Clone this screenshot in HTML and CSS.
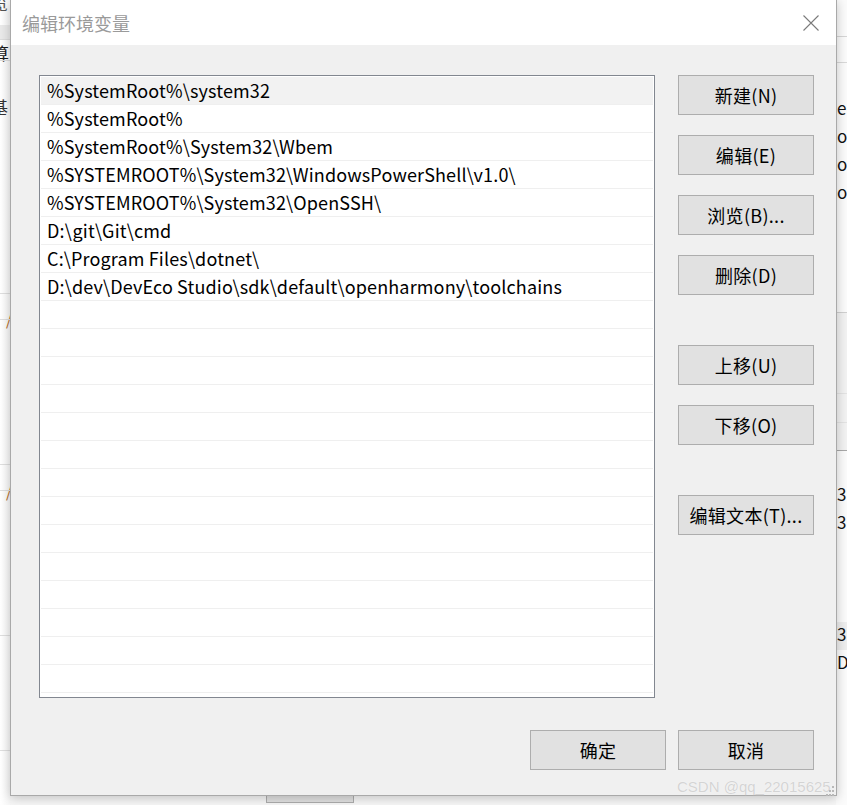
FILE: index.html
```html
<!DOCTYPE html>
<html lang="zh-CN">
<head>
<meta charset="utf-8">
<title>编辑环境变量</title>
<link rel="stylesheet" href="styles.css">
</head>
<body>
<div class="desktop">
  <div class="backwin">
    <div class="bw-left">
      <span class="frag f-lan">览</span>
      <div class="bw-band"></div>
      <span class="frag f-suan">算</span>
      <span class="frag f-ji">基</span>
      <div class="bw-line l1"></div>
      <div class="bw-line l2"></div>
      <span class="frag f-o1">/</span>
      <div class="bw-line l3"></div>
      <div class="bw-line l4"></div>
      <span class="frag f-o2">/</span>
      <div class="bw-line l5"></div>
      <div class="bw-line l6"></div>
    </div>
    <div class="bw-right">
      <div class="bwr-line r0"></div>
      <div class="bwr-band"></div>
      <span class="rfrag" style="top:100px">el</span>
      <span class="rfrag" style="top:128px">ol</span>
      <span class="rfrag" style="top:156px">ol</span>
      <span class="rfrag" style="top:184px">ol</span>
      <div class="bwr-gray"></div>
      <span class="rfrag" style="top:486px">3</span>
      <span class="rfrag" style="top:514px">3</span>
      <div class="bwr-row"></div>
      <span class="rfrag" style="top:626px">3</span>
      <span class="rfrag" style="top:654px">D</span>
    </div>
    <div class="bw-bottombtn"></div>
  </div>

  <div class="dialog">
    <div class="titlebar">
      <span class="title">编辑环境变量</span>
      <svg class="close" width="16" height="16" viewBox="0 0 16 16"><path d="M0.5 0.5 L15.5 15.5 M15.5 0.5 L0.5 15.5" stroke="#7a7a7a" stroke-width="1.1" fill="none"/></svg>
    </div>
    <div class="body">
      <div class="main">
        <div class="list">
          <div class="row selected">%SystemRoot%\system32</div>
          <div class="row">%SystemRoot%</div>
          <div class="row">%SystemRoot%\System32\Wbem</div>
          <div class="row">%SYSTEMROOT%\System32\WindowsPowerShell\v1.0\</div>
          <div class="row">%SYSTEMROOT%\System32\OpenSSH\</div>
          <div class="row">D:\git\Git\cmd</div>
          <div class="row">C:\Program Files\dotnet\</div>
          <div class="row">D:\dev\DevEco Studio\sdk\default\openharmony\toolchains</div>
          <div class="row"></div>
          <div class="row"></div>
          <div class="row"></div>
          <div class="row"></div>
          <div class="row"></div>
          <div class="row"></div>
          <div class="row"></div>
          <div class="row"></div>
          <div class="row"></div>
          <div class="row"></div>
          <div class="row"></div>
          <div class="row"></div>
          <div class="row"></div>
          <div class="row"></div>
        </div>
        <div class="side">
          <button class="btn">新建(N)</button>
          <button class="btn">编辑(E)</button>
          <button class="btn">浏览(B)...</button>
          <button class="btn">删除(D)</button>
          <button class="btn gap">上移(U)</button>
          <button class="btn">下移(O)</button>
          <button class="btn gap">编辑文本(T)...</button>
        </div>
      </div>
      <div class="footer">
        <button class="btn">确定</button>
        <button class="btn">取消</button>
      </div>
    </div>
    <span class="watermark">CSDN @qq_22015625</span>
    <svg class="grip" width="8" height="10" viewBox="0 0 8 10"><g fill="#b8b8b8"><rect x="6" y="0" width="2" height="2"/><rect x="3" y="4" width="2" height="2"/><rect x="6" y="4" width="2" height="2"/><rect x="0" y="8" width="2" height="2"/><rect x="3" y="8" width="2" height="2"/><rect x="6" y="8" width="2" height="2"/></g></svg>
  </div>
</div>
</body>
</html>
```

FILE: styles.css
```css
* { box-sizing: border-box; }
html, body {
  margin: 0;
  padding: 0;
}
body {
  width: 847px;
  height: 805px;
  overflow: hidden;
  background: #f7f7f7;
  font-family: "Noto Sans CJK SC", "Noto Sans", sans-serif;
}
.desktop {
  position: relative;
  width: 847px;
  height: 805px;
  overflow: hidden;
}

/* background window fragments */
.backwin { position: absolute; inset: 0; }
.bw-left {
  position: absolute; left: 0; top: 0; width: 11px; height: 805px;
  background: linear-gradient(to right, #ffffff, #f6f6f6);
}
.bw-band {
  position: absolute; left: 0; top: 25px; width: 11px; height: 15px;
  background: #e9e9e9; border-bottom: 1px solid #dcdcdc;
}
.frag {
  position: absolute; font-size: 17px; line-height: 17px; color: #1a1a1a;
}
.f-lan { left: -9px; top: -6px; color: #555; }
.f-suan { left: -8px; top: 44px; }
.f-ji { left: -9px; top: 98px; color: #333; }
.f-o1 { left: 6px; top: 311px; color: #b46a1c; font-size: 15px; }
.f-o2 { left: 6px; top: 483px; color: #b46a1c; font-size: 15px; }
.bw-line { position: absolute; left: 0; width: 11px; height: 1px; background: #dedede; }
.l1 { top: 60px; }
.l2 { top: 293px; }
.l3 { top: 319px; }
.l4 { top: 464px; }
.l5 { top: 490px; }
.l6 { top: 635px; }
.bw-left::after {
  content: ""; position: absolute; left: 0; top: 750px; width: 11px; height: 1px; background: #dedede;
}

.bw-right {
  position: absolute; left: 836px; top: 0; width: 11px; height: 805px; background: #fbfbfb;
}
.bwr-line { position: absolute; left: 0; width: 11px; height: 1px; background: #d6d6d6; }
.r0 { top: 36px; }
.bwr-band { position: absolute; left: 0; top: 62px; width: 11px; height: 1px; background: #d9d9d9; }
.rfrag {
  position: absolute; left: 1px; font-size: 17px; line-height: 16px; color: #111;
  font-family: "Noto Sans CJK SC", sans-serif;
}
.bwr-gray {
  position: absolute; left: 0; top: 312px; width: 11px; height: 139px;
  background: #f2f2f2; border-top: 1px solid #d0d0d0; border-bottom: 1px solid #a8a8a8;
}
.bwr-gray::before {
  content: ""; position: absolute; left: 0; top: 80px; width: 11px; height: 28px;
  border-top: 1px solid #e3e3e3; border-bottom: 1px solid #e3e3e3;
}
.bwr-row {
  position: absolute; left: 0; top: 622px; width: 11px; height: 28px; background: #eeeeee;
}
.bw-bottombtn {
  position: absolute; left: 266px; top: 790px; width: 88px; height: 13px;
  background: #e1e1e1; border: 1px solid #adadad;
}

/* dialog */
.dialog {
  position: absolute;
  left: 10px;
  top: -1px;
  width: 827px;
  height: 797px;
  background: #f0f0f0;
  border: 1px solid #a9a9a9;
  box-shadow: 0 2px 10px rgba(0,0,0,0.22);
  display: flex;
  flex-direction: column;
}
.titlebar {
  height: 45px;
  background: #ffffff;
  display: flex;
  align-items: center;
  justify-content: space-between;
  padding: 0 17px 0 11px;
  flex: none;
}
.title {
  font-size: 18px;
  color: #9a9a9a;
}
.close { display: block; margin-top: 1px; }

.body {
  flex: 1;
  padding: 30px 22px 0 28px;
  display: flex;
  flex-direction: column;
}
.main {
  display: flex;
  gap: 23px;
}
.list {
  width: 616px;
  height: 623px;
  background: #ffffff;
  border: 1px solid #828790;
  padding: 1px 1px 0 1px;
  overflow: hidden;
}
.row {
  height: 28px;
  line-height: 27px;
  border-bottom: 1px solid #efefef;
  padding-left: 6px;
  font-size: 18px;
  letter-spacing: 0.15px;
  color: #000;
  white-space: nowrap;
}
.row.selected { background: #f2f2f2; }

.side {
  display: flex;
  flex-direction: column;
  gap: 20px;
}
.btn {
  width: 136px;
  height: 40px;
  background: #e1e1e1;
  border: 1px solid #adadad;
  border-radius: 0;
  font-family: "Noto Sans CJK SC", "Noto Sans", sans-serif;
  font-size: 18px;
  letter-spacing: 0.3px;
  color: #000;
  padding: 0;
  margin: 0;
  line-height: 38px;
}
.side .btn.gap { margin-top: 30px; }
.footer {
  display: flex;
  justify-content: flex-end;
  gap: 12px;
  margin-top: 32px;
}
.watermark {
  position: absolute;
  left: 666px;
  top: 778px;
  font-family: "Liberation Sans", sans-serif;
  font-size: 15px;
  color: #d4d4d4;
  text-shadow: 0 0 1px #ffffff;
}
.grip { position: absolute; left: 815px; top: 786px; }
```
